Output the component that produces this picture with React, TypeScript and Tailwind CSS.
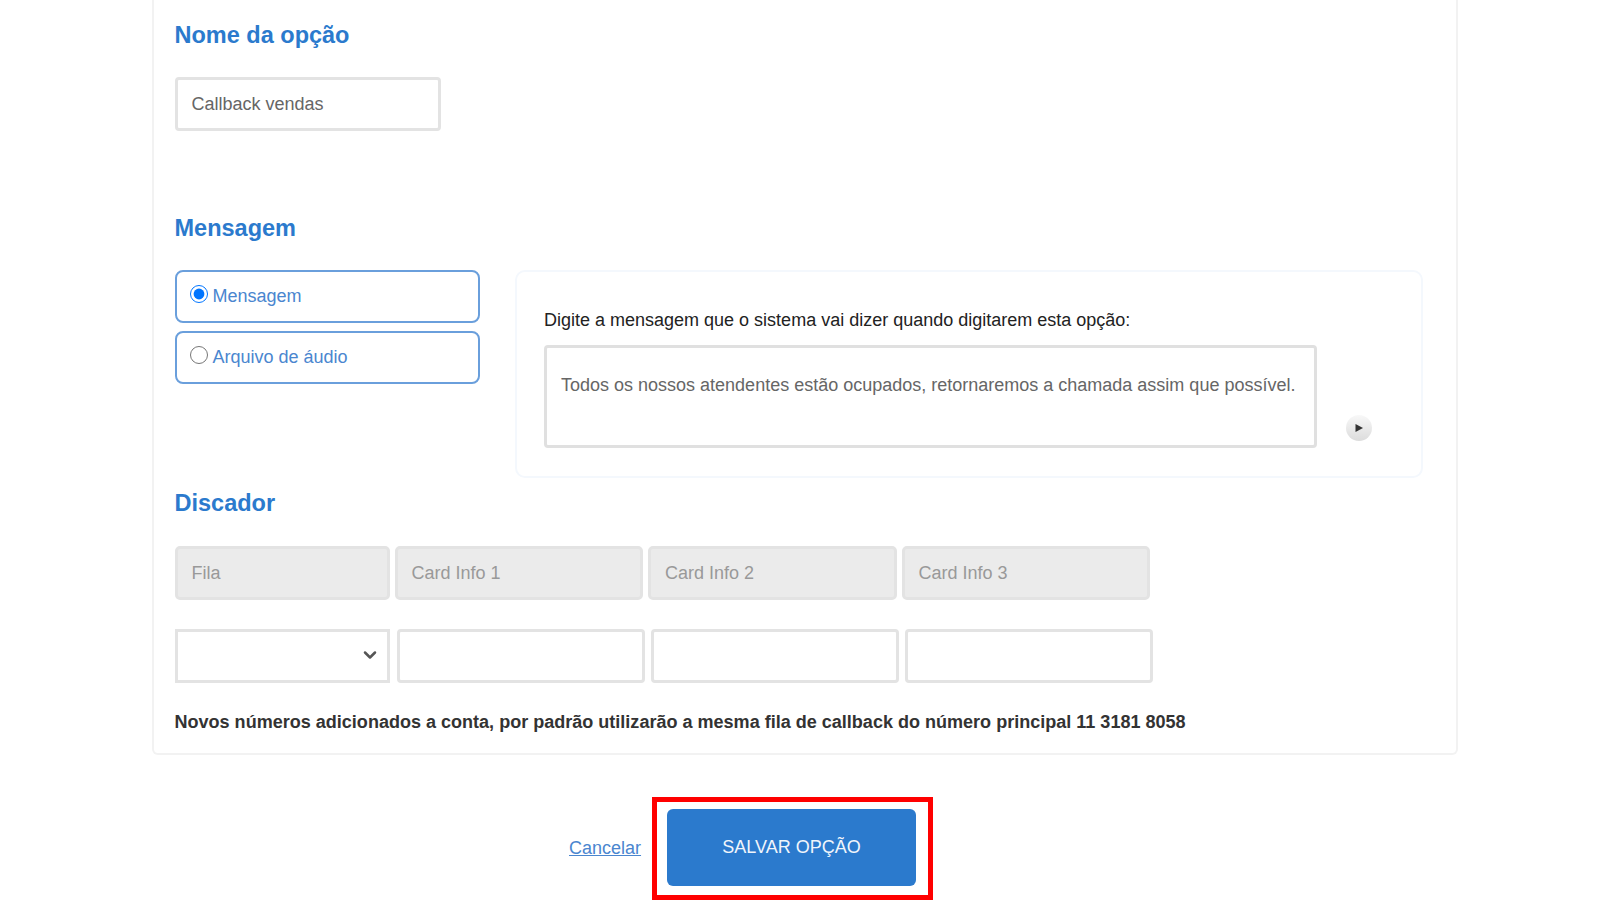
import { ChevronDown } from 'lucide-react'

const font = 'font-["Liberation_Sans",Arial,sans-serif]'

function Heading({ children, className }: { children: string; className: string }) {
  return <h2 className={`text-[23.5px] leading-[28px] font-bold text-[#2b7acd] ${className}`}>{children}</h2>
}

function Choice({ label, checked, className }: { label: string; checked?: boolean; className?: string }) {
  return (
    <label className={`flex h-[53px] w-[305px] items-start rounded-[8px] border-2 border-[#6a9fdc] pl-[13px] pt-[13px] ${className ?? ''}`}>
      <input type="radio" name="tipo" defaultChecked={checked} className="m-0 h-[18px] w-[18px] accent-[#0075ff]" />
      <span className="ml-[5px] mt-[1px] text-[18px] leading-[20px] text-[#4a86cf]">{label}</span>
    </label>
  )
}

export default function App() {
  const disabled = ['Card Info 1', 'Card Info 2', 'Card Info 3']
  return (
    <div className={`h-[900px] w-[1600px] overflow-hidden bg-white ${font}`}>
      <div className="ml-[152px] h-[755px] w-[1306px] rounded-b-[6px] border-x-2 border-b-2 border-[#f2f2f2] pl-[20.5px]">
        <Heading className="pt-[21px]">Nome da opção</Heading>
        <input
          defaultValue="Callback vendas"
          className="mt-[28px] block h-[54px] w-[266px] rounded-[4px] border-[3px] border-[#e3e3e3] px-[14px] text-[18px] text-[#666] outline-none"
        />

        <Heading className="mt-[83px]">Mensagem</Heading>
        <div className="mt-[28px] flex">
          <div>
            <Choice label="Mensagem" checked />
            <Choice label="Arquivo de áudio" className="mt-[7.5px]" />
          </div>
          <div className="ml-[35.5px] h-[208px] w-[908px] rounded-[10px] border-2 border-[#f4f8fd] pl-[27px] pt-[37px]">
            <p className="text-[18px] leading-[22px] text-[#222]">Digite a mensagem que o sistema vai dizer quando digitarem esta opção:</p>
            <div className="mt-[14px] flex items-end">
              <div className="h-[103px] w-[773px] rounded-[4px] border-[3px] border-[#e0e0e0] px-[14px] pt-[25px] text-[18px] leading-[24px] text-[#666]">
                Todos os nossos atendentes estão ocupados, retornaremos a chamada assim que possível.
              </div>
              <button className="mb-[7px] ml-[29px] flex h-[26px] w-[26px] items-center justify-center rounded-full bg-gradient-to-b from-[#f8f8f8] to-[#dcdcdc]">
                <svg width="10" height="10" viewBox="0 0 10 10"><path d="M1.5 1 L9 5 L1.5 9 Z" fill="#333" /></svg>
              </button>
            </div>
          </div>
        </div>

        <Heading className="mt-[11px]">Discador</Heading>
        <div className="mt-[29px] flex gap-[5px]">
          <div className="flex h-[54px] w-[215px] items-center rounded-[5px] border-[3px] border-[#e3e3e3] bg-[#ebebeb] px-[14px] text-[18px] text-[#999]">Fila</div>
          {disabled.map((t) => (
            <div key={t} className="flex h-[54px] w-[248.5px] items-center rounded-[5px] border-[3px] border-[#e3e3e3] bg-[#ebebeb] px-[14px] text-[18px] text-[#999]">{t}</div>
          ))}
        </div>
        <div className="mt-[29px] flex gap-[6px]">
          <div className="relative mr-[1px] h-[54px] w-[215px]">
            <select className="h-full w-full appearance-none border-[3px] border-[#e3e3e3] bg-white outline-none" />
            <ChevronDown className="absolute right-[10px] top-[16px] h-[20px] w-[20px] text-[#555]" strokeWidth={3} />
          </div>
          {[0, 1, 2].map((i) => (
            <input key={i} className="h-[54px] w-[248px] rounded-[4px] border-[3px] border-[#e3e3e3] outline-none" />
          ))}
        </div>
        <p className="mt-[28px] text-[18.05px] leading-[22px] font-bold text-[#333]">
          Novos números adicionados a conta, por padrão utilizarão a mesma fila de callback do número principal 11 3181 8058
        </p>
      </div>

      <div className="mt-[42px] flex items-center pl-[569px]">
        <a className="text-[18px] text-[#4a86cf] underline">Cancelar</a>
        <div className="ml-[11px] h-[103px] w-[281px] border-[5px] border-[#ff0000] pl-[10px] pt-[7px]">
          <button className="h-[77px] w-[249px] rounded-[6px] bg-[#2b7acd] text-[18px] text-[#f0f5fb]">SALVAR OPÇÃO</button>
        </div>
      </div>
    </div>
  )
}
